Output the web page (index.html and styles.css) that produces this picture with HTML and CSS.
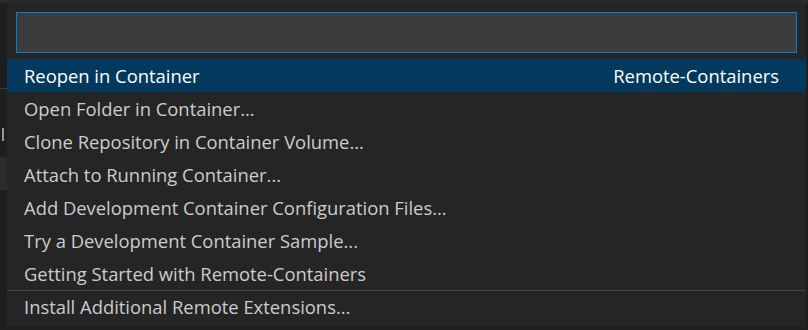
FILE: index.html
```html
<!DOCTYPE html>
<html>
  <head>
    <meta charset="UTF-8" />
    <title>Quick Pick - Remote-Containers</title>
    <link rel="stylesheet" href="styles.css">
  </head>
  <body>
    <div class="top-strip"></div>
    <div class="frame">
      <div class="gutter">
        <div class="gutter-line"></div>
        <div class="gutter-mark"></div>
        <div class="gutter-block"></div>
      </div>
      <div class="quick-input">
        <div class="input-box"></div>
        <ul class="pick-list">
          <li class="pick-item selected">
            <span class="label">Reopen in Container</span>
            <span class="detail">Remote-Containers</span>
          </li>
          <li class="pick-item"><span class="label">Open Folder in Container...</span></li>
          <li class="pick-item"><span class="label">Clone Repository in Container Volume...</span></li>
          <li class="pick-item"><span class="label">Attach to Running Container...</span></li>
          <li class="pick-item"><span class="label">Add Development Container Configuration Files...</span></li>
          <li class="pick-item"><span class="label">Try a Development Container Sample...</span></li>
          <li class="pick-item"><span class="label">Getting Started with Remote-Containers</span></li>
          <li class="pick-item separator"><span class="label">Install Additional Remote Extensions...</span></li>
        </ul>
      </div>
      <div class="edge"></div>
    </div>
  </body>
</html>
```

FILE: styles.css
```css
body {
  margin: 0;
  padding: 0;
  background-color: #1e1e1e;
  font-family: "Open Sans", "Noto Sans", sans-serif;
  overflow: hidden;
  width: 808px;
  height: 330px;
}
.top-strip {
  height: 3px;
  background-color: #2a2a2a;
}
.frame {
  display: flex;
}
.gutter {
  width: 7px;
  background-color: #1e1e1e;
  display: flex;
  flex-direction: column;
}
.gutter-line {
  margin-top: 85px;
  height: 1px;
  background-color: #3a3a3a;
}
.gutter-mark {
  margin-top: 39px;
  margin-left: 2px;
  width: 2px;
  height: 13px;
  background-color: #8a9aaa;
}
.gutter-block {
  margin-top: 16px;
  height: 33px;
  background-color: #2a2a2f;
}
.quick-input {
  width: 799px;
  background-color: #252526;
  padding: 9px 0 4px;
}
.edge {
  flex: 1;
  background-color: #1e1e1e;
}
.input-box {
  margin: 0 9px;
  height: 39px;
  background-color: #3c3c3c;
  border: 1px solid #007fd4;
}
.pick-list {
  list-style: none;
  margin: 6px 0 0;
  padding: 0;
}
.pick-item {
  display: flex;
  justify-content: space-between;
  height: 33px;
  line-height: 33px;
  padding: 0 27px 0 17px;
  font-size: 18.4px;
  color: #cccccc;
  white-space: nowrap;
}
.pick-item.selected {
  background-color: #04395e;
  color: #ffffff;
}
.pick-item.separator {
  border-top: 1px solid #454545;
  height: 32px;
  line-height: 32px;
}
```
